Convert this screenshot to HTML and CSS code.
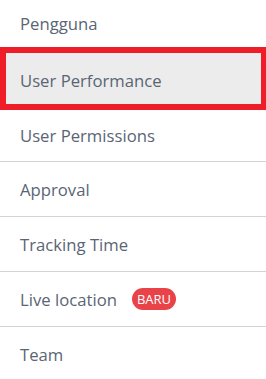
FILE: index.html
```html
<!DOCTYPE html>
<html>
<head>
  <title>Menu</title>
  <link rel="stylesheet" href="styles.css">
</head>
<body>
  <ul class="menu">
    <li class="menu-item first">Pengguna</li>
    <li class="menu-item active">User Performance</li>
    <li class="menu-item after-active">User Permissions</li>
    <li class="menu-item">Approval</li>
    <li class="menu-item">Tracking Time</li>
    <li class="menu-item">Live location <span class="badge">BARU</span></li>
    <li class="menu-item last">Team</li>
  </ul>
</body>
</html>
```
FILE: styles.css
```css
body {
  margin: 0;
  background: #fff;
  font-family: "Open Sans", sans-serif;
}

.menu {
  list-style: none;
  margin: 0;
  padding: 0;
}

.menu-item {
  display: flex;
  align-items: center;
  box-sizing: border-box;
  height: 55px;
  padding-left: 20px;
  font-size: 16.7px;
  color: #5a6574;
  border-bottom: 1px solid #d4d4d4;
}

.menu-item.first {
  height: 47px;
  border-bottom: none;
}

/* highlighted row */
.menu-item.active {
  height: 63px;
  padding-left: 14px;
  padding-top: 3px;
  background: #ececec;
  border: 6px solid #ee1d27;
  border-right-width: 5px;
}

.menu-item.after-active {
  height: 52px;
}

.menu-item.last {
  border-bottom: none;
}

.badge {
  display: inline-block;
  margin-left: 15px;
  padding: 2px 5px;
  border-radius: 11px;
  background: #e9434a;
  color: #fff;
  font-size: 13px;
  line-height: 18px;
}
```
